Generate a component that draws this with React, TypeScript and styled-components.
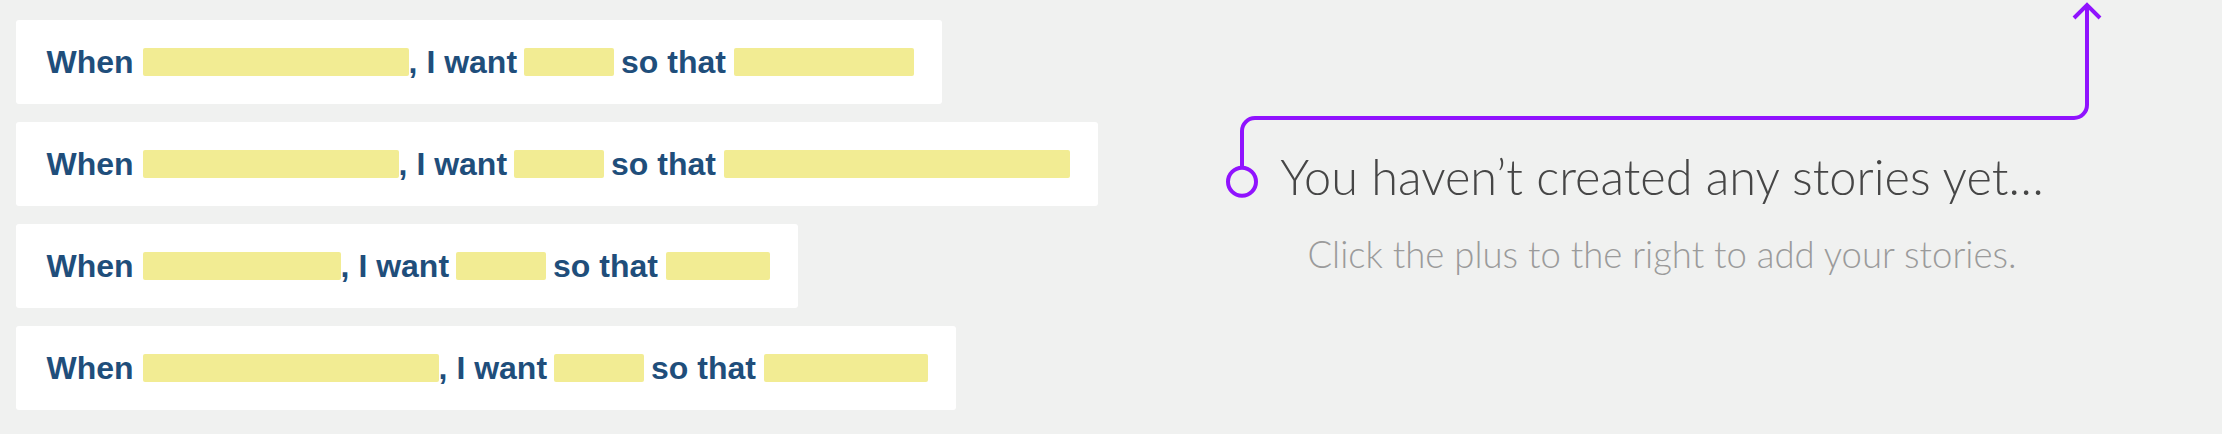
import React from "react";
import styled, { createGlobalStyle } from "styled-components";

const GlobalStyle = createGlobalStyle`
  html, body {
    margin: 0;
    padding: 0;
    background: #f0f1f0;
  }
  body {
    font-family: "Liberation Sans", Arial, sans-serif;
  }
`;

const Page = styled.div`
  position: relative;
  display: flex;
  width: 2222px;
  height: 434px;
  overflow: hidden;
  background: #f0f1f0;
`;

const StoryList = styled.div`
  flex: none;
  display: flex;
  flex-direction: column;
  align-items: flex-start;
  gap: 18px;
  padding: 20px 0 0 16px;
`;

const StoryCard = styled.div`
  display: flex;
  align-items: center;
  height: 84px;
  box-sizing: border-box;
  padding: 0 28px 0 30.5px;
  background: #ffffff;
  border-radius: 3px;
`;

const Word = styled.span<{ $gap?: number }>`
  font-family: "Liberation Sans", Arial, sans-serif;
  font-weight: 700;
  font-size: 32px;
  color: #1f4e7b;
  white-space: pre;
  margin-left: ${(p) => p.$gap ?? 0}px;
`;

const Blank = styled.span<{ $gap: number }>`
  display: block;
  height: 28px;
  margin-left: ${(p) => p.$gap}px;
  background: #f2ec93;
  border-radius: 2px;
`;

const EmptyState = styled.div`
  flex: 1;
  display: flex;
  flex-direction: column;
  align-items: center;
  padding: 147px 0 0 4px;
`;

const Heading = styled.h2`
  margin: 0;
  font-family: Lato, "Open Sans", sans-serif;
  font-weight: 300;
  font-size: 48.7px;
  line-height: 58px;
  color: #464646;
  white-space: nowrap;
`;

const Hint = styled.p`
  margin: 27px 0 0;
  font-family: Lato, "Open Sans", sans-serif;
  font-weight: 300;
  font-size: 36.5px;
  line-height: 44px;
  color: #9b9b9b;
  white-space: nowrap;
`;

const Connector = styled.svg`
  position: absolute;
  left: 1220px;
  top: 0;
  width: 900px;
  height: 200px;
  pointer-events: none;
`;

const stories = [
  { a: 266, b: 90, c: 180 },
  { a: 256, b: 90, c: 346 },
  { a: 198, b: 90, c: 104 },
  { a: 296, b: 90, c: 164 },
];

export default function App() {
  return (
    <>
      <GlobalStyle />
      <Page>
        <StoryList>
          {stories.map((s, i) => (
            <StoryCard key={i}>
              <Word>When</Word>
              <Blank $gap={9} style={{ width: s.a }} />
              <Word>, I want</Word>
              <Blank $gap={7} style={{ width: s.b }} />
              <Word $gap={7}>so that</Word>
              <Blank $gap={8} style={{ width: s.c }} />
            </StoryCard>
          ))}
        </StoryList>
        <EmptyState>
          <Heading>You haven’t created any stories yet…</Heading>
          <Hint>Click the plus to the right to add your stories.</Hint>
        </EmptyState>
        <Connector viewBox="0 0 900 200" fill="none">
          <circle cx="22" cy="181.7" r="14" stroke="#9013fe" strokeWidth="4" />
          <path
            d="M22 167.5 V131 A13 13 0 0 1 35 118 H854 A13 13 0 0 0 867 105 V5"
            stroke="#9013fe"
            strokeWidth="4"
          />
          <path
            d="M854 18 L867 5 L880 18"
            stroke="#9013fe"
            strokeWidth="4"
            strokeLinejoin="miter"
          />
        </Connector>
      </Page>
    </>
  );
}
